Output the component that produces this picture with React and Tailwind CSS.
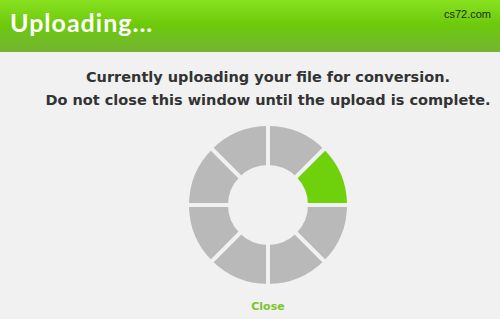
import React from 'react';

const CX = 80;
const CY = 80;
const R_OUT = 79;
const R_IN = 40;

const sector = (i) => {
    // segment i covers angles from i*45 to (i+1)*45 degrees, counter-clockwise from right
    const a0 = (i * 45 * Math.PI) / 180;
    const a1 = ((i + 1) * 45 * Math.PI) / 180;
    const p = (r, a) => `${(CX + r * Math.cos(a)).toFixed(2)} ${(CY - r * Math.sin(a)).toFixed(2)}`;
    return `M ${p(R_OUT, a0)} A ${R_OUT} ${R_OUT} 0 0 0 ${p(R_OUT, a1)} L ${p(R_IN, a1)} A ${R_IN} ${R_IN} 0 0 1 ${p(R_IN, a0)} Z`;
};

const Spinner = () => (
    <svg width="160" height="160" viewBox="0 0 160 160">
        {[0, 1, 2, 3, 4, 5, 6, 7].map(i => (
            <path key={i} d={sector(i)} fill={i === 0 ? '#6fd00c' : '#b9b9b9'} />
        ))}
        {[0, 45, 90, 135].map(deg => (
            <line
                key={deg}
                x1={CX - 82 * Math.cos((deg * Math.PI) / 180)}
                y1={CY + 82 * Math.sin((deg * Math.PI) / 180)}
                x2={CX + 82 * Math.cos((deg * Math.PI) / 180)}
                y2={CY - 82 * Math.sin((deg * Math.PI) / 180)}
                stroke="#f1f1f1"
                strokeWidth="4"
            />
        ))}
    </svg>
);

export default function App() {
    return (
        <div className="w-[500px] h-[319px] bg-[#f1f1f1] overflow-hidden">
            <div className="h-[52px] bg-gradient-to-b from-[#88e220] via-[#6cc808] to-[#74b52f] flex items-start justify-between">
                <h1 className="pl-[10px] pt-[6px] text-white text-[25px] font-bold tracking-[1px] font-['Lato',sans-serif] leading-[32px]">
                    Uploading...
                </h1>
                <span className="pr-[9px] pt-[6px] text-[11px] text-[#1c2a0a] font-['Liberation_Sans',sans-serif]">
                    cs72.com
                </span>
            </div>
            <div className="pl-[36px] flex flex-col items-center">
                <div className="mt-[14px] text-center text-[14.5px] font-bold leading-[23px] text-[#333333] font-['DejaVu_Sans',sans-serif] whitespace-nowrap">
                    <p>Currently uploading your file for conversion.</p>
                    <p>Do not close this window until the upload is complete.</p>
                </div>
                <div className="mt-[13px]">
                    <Spinner />
                </div>
                <button className="mt-[14px] text-[11px] font-bold text-[#7cc52a] font-['DejaVu_Sans',sans-serif]">
                    Close
                </button>
            </div>
        </div>
    );
}
